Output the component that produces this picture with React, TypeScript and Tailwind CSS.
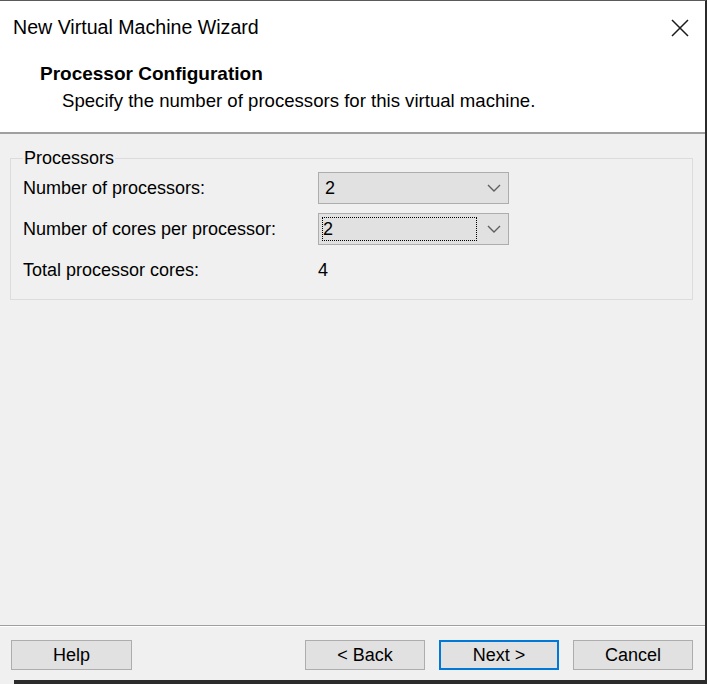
import React from 'react';

const Chevron = () => (
  <svg width="14" height="8" viewBox="0 0 14 8" fill="none">
    <path d="M1 1l6 6 6-6" stroke="#5f5f5f" strokeWidth="1.4" />
  </svg>
);

interface ComboProps {
  value: string;
  focused?: boolean;
}

const Combo: React.FC<ComboProps> = ({ value, focused }) => (
  <div className="flex h-[32px] w-[191px] items-center border border-[#adadad] bg-[#e1e1e1] pr-[7px]">
    {focused ? (
      <div className="ml-[3px] flex h-[24px] w-[155px] items-center border border-dotted border-black">
        <span>{value}</span>
      </div>
    ) : (
      <span className="pl-[6px]">{value}</span>
    )}
    <div className="ml-auto flex items-center">
      <Chevron />
    </div>
  </div>
);

const WizardButton: React.FC<{ label: string; primary?: boolean; wide?: boolean }> = ({ label, primary, wide }) => (
  <button
    className={
      primary
        ? 'h-[30px] w-[120px] border-2 border-[#0078d7] bg-[#e1e1e1] text-[18px] leading-none text-black'
        : wide
          ? 'h-[30px] w-[121px] border border-[#adadad] bg-[#e1e1e1] text-[18px] leading-none text-black'
          : 'h-[30px] w-[120px] border border-[#adadad] bg-[#e1e1e1] text-[18px] leading-none text-black'
    }
  >
    {label}
  </button>
);

export default function App() {
  return (
    <div
      className="flex h-[684px] w-[707px] flex-col border-t border-r-2 border-t-[#5a5a5a] border-r-[#2b2b2b] bg-[#f0f0f0] text-[18px] text-black"
      style={{ fontFamily: '"Segoe UI", "Liberation Sans", Arial, sans-serif' }}
    >
      {/* header */}
      <div className="h-[131px] bg-white">
        <div className="flex h-[53px] items-center justify-between pl-[13px] pr-[16px]">
          <span className="text-[19.6px]">New Virtual Machine Wizard</span>
          <svg width="18" height="18" viewBox="0 0 18 18">
            <path d="M1 1l16 16M17 1L1 17" stroke="#1a1a1a" strokeWidth="1.5" />
          </svg>
        </div>
        <div className="pt-[6px] leading-[27px]">
          <div className="pl-[40px] text-[19px] font-bold">Processor Configuration</div>
          <div className="pl-[62px] text-[18.6px]">Specify the number of processors for this virtual machine.</div>
        </div>
      </div>
      <div className="h-[2px] bg-[#a0a0a0]" />

      {/* content */}
      <div className="flex-1 px-[10px] pt-[14px]">
        <fieldset className="w-[683px] border border-[#dcdcdc] pl-[12px] pb-[13px]">
          <legend className="px-[1px] leading-[20px]">Processors</legend>
          <div className="grid grid-cols-[295px_191px] items-center gap-y-[9px] pt-[4px]">
            <span>Number of processors:</span>
            <Combo value="2" />
            <span>Number of cores per processor:</span>
            <Combo value="2" focused />
            <span className="flex h-[32px] items-center">Total processor cores:</span>
            <span>4</span>
          </div>
        </fieldset>
      </div>

      {/* footer */}
      <div className="h-[1px] bg-[#a0a0a0]" />
      <div className="h-[1px] bg-white" />
      <div className="flex items-start justify-between pl-[11px] pr-[12px] pt-[13px] pb-[10px]">
        <WizardButton label="Help" wide />
        <div className="flex gap-[14px]">
          <WizardButton label="< Back" />
          <WizardButton label="Next >" primary />
          <WizardButton label="Cancel" />
        </div>
      </div>
      <div className="flex h-[4px]">
        <div className="w-[14px] bg-[#f0f0f0]" />
        <div className="flex-1 bg-[#2b2b2b]" />
      </div>
    </div>
  );
}
